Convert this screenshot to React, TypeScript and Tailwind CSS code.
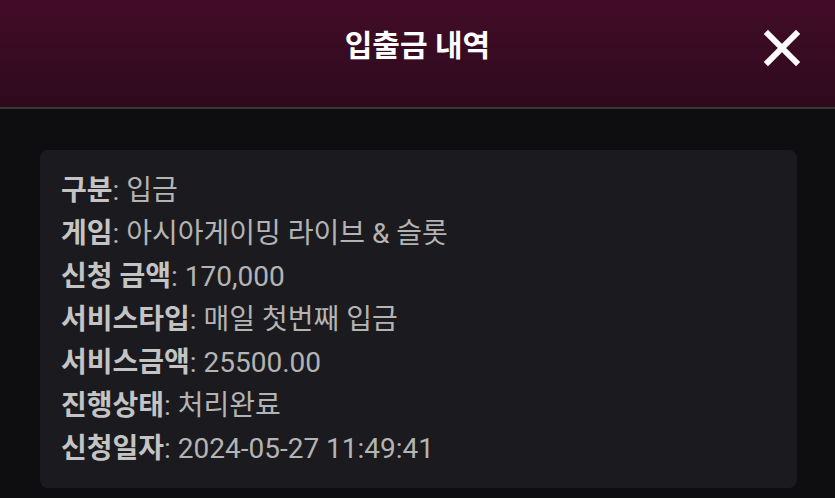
import React from 'react';

const rows: { label: string; value: string }[] = [
  { label: '구분', value: '입금' },
  { label: '게임', value: '아시아게이밍 라이브 & 슬롯' },
  { label: '신청 금액', value: '170,000' },
  { label: '서비스타입', value: '매일 첫번째 입금' },
  { label: '서비스금액', value: '25500.00' },
  { label: '진행상태', value: '처리완료' },
  { label: '신청일자', value: '2024-05-27 11:49:41' },
];

const CloseIcon = () => (
  <svg width="38" height="38" viewBox="0 0 38 38" fill="none">
    <path d="M5 5 L33 33 M33 5 L5 33" stroke="#ffffff" strokeWidth="6" strokeLinecap="square" />
  </svg>
);

export default function App() {
  return (
    <div
      className="w-[835px] h-[498px] overflow-hidden bg-[#0e0e10] flex flex-col"
      style={{ fontFamily: "Roboto, 'Noto Sans CJK KR', sans-serif" }}
    >
      <header className="relative h-[109px] shrink-0 flex items-center justify-center pb-[16px] bg-gradient-to-b from-[#420c28] to-[#2e0a1c] border-b-2 border-[#38383c]">
        <h1 className="text-[30px] font-bold text-white leading-none">입출금 내역</h1>
        <button type="button" className="absolute right-[34px] top-[29px]">
          <CloseIcon />
        </button>
      </header>

      <div className="pt-[41px] pl-[40px] pr-[38px]">
        <div className="bg-[#1b1b1f] rounded-[8px] pl-[21px] pr-4 pt-[19px] pb-[18px]">
          {rows.map((row) => (
            <div key={row.label} className="text-[28px] leading-[43px] text-[#b4b4b4] whitespace-nowrap">
              <span className="font-bold text-[#c4c4c4]">{row.label}</span>
              <span>: {row.value}</span>
            </div>
          ))}
        </div>
      </div>
    </div>
  );
}
